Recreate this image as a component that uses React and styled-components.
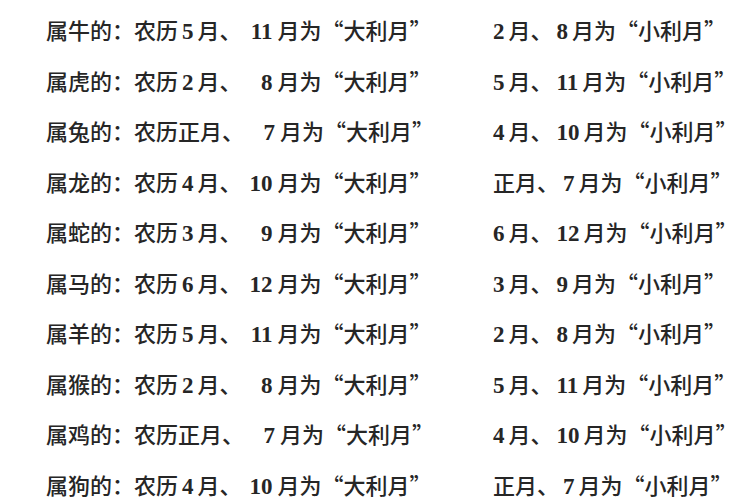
import React from 'react'
import styled, { createGlobalStyle } from 'styled-components'

const GlobalStyle = createGlobalStyle`
    html, body {
        margin: 0;
        padding: 0;
        background: #fff;
    }
`

const rows = [
    { animal: '牛', a: '5', b: '11', c: '2', d: '8' },
    { animal: '虎', a: '2', b: '8', c: '5', d: '11' },
    { animal: '兔', a: '正', b: '7', c: '4', d: '10' },
    { animal: '龙', a: '4', b: '10', c: '正', d: '7' },
    { animal: '蛇', a: '3', b: '9', c: '6', d: '12' },
    { animal: '马', a: '6', b: '12', c: '3', d: '9' },
    { animal: '羊', a: '5', b: '11', c: '2', d: '8' },
    { animal: '猴', a: '2', b: '8', c: '5', d: '11' },
    { animal: '鸡', a: '正', b: '7', c: '4', d: '10' },
    { animal: '狗', a: '4', b: '10', c: '正', d: '7' },
]

const Page = styled.div`
    width: 750px;
    height: 500px;
    overflow: hidden;
    box-sizing: border-box;
    padding: 4px 0 0 46px;
    display: flex;
    flex-direction: column;
    font-family: 'Noto Sans CJK SC', 'Noto Sans', sans-serif;
    font-weight: 500;
    font-size: 22px;
    color: #262626;
`

const Row = styled.div`
    display: grid;
    grid-template-columns: 447px auto;
    height: 50.5px;
    line-height: 50.5px;
    white-space: nowrap;
`

const Num = styled.span`
    display: inline-block;
    font-family: 'Liberation Serif', 'Times New Roman', serif;
    font-weight: bold;
    font-size: 23px;
    margin: 0 ${(props) => (props.$slot ? '5px' : '4px')} 0
        ${(props) => (props.$first ? '0' : props.$slot ? '8px' : '4px')};
    min-width: ${(props) => (props.$slot ? '1em' : '0')};
    text-align: right;
`

function Month({ value, first, slot }) {
    if (value === '正') return <>正</>
    return (
        <Num $first={first} $slot={slot}>
            {value}
        </Num>
    )
}

export default function App() {
    return (
        <>
            <GlobalStyle />
            <Page lang="zh-CN">
                {rows.map((r) => (
                    <Row key={r.animal}>
                        <span>
                            属{r.animal}的：农历
                            <Month value={r.a} />月、
                            <Month value={r.b} slot />月为“大利月”
                        </span>
                        <span>
                            <Month value={r.c} first />月、
                            <Month value={r.d} />月为“小利月”
                        </span>
                    </Row>
                ))}
            </Page>
        </>
    )
}
